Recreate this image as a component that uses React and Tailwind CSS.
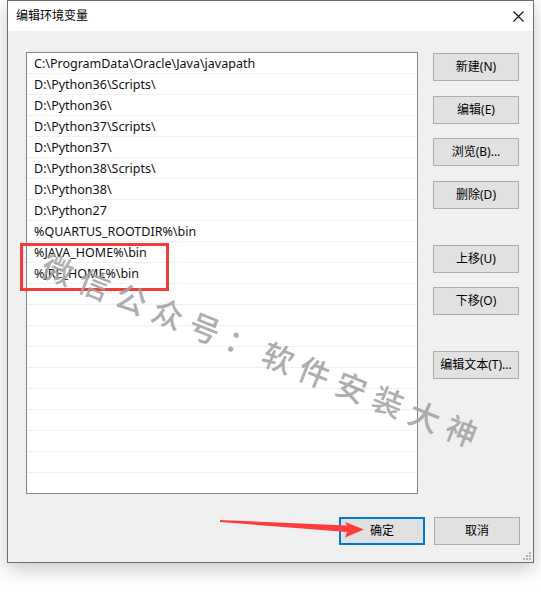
import React from "react";

const items = [
  "C:\\ProgramData\\Oracle\\Java\\javapath",
  "D:\\Python36\\Scripts\\",
  "D:\\Python36\\",
  "D:\\Python37\\Scripts\\",
  "D:\\Python37\\",
  "D:\\Python38\\Scripts\\",
  "D:\\Python38\\",
  "D:\\Python27",
  "%QUARTUS_ROOTDIR%\\bin",
  "%JAVA_HOME%\\bin",
  "%JRE_HOME%\\bin",
];

function Btn({ children, className = "", primary = false }) {
  return (
    <div
      className={
        "w-[86px] h-[28px] flex items-center justify-center bg-[#e1e1e1] text-[12px] text-black " +
        (primary ? "border-2 border-[#0078d7] " : "border border-[#adadad] ") +
        className
      }
    >
      {children}
    </div>
  );
}

export default function App() {
  const rows = Array.from({ length: 22 }, (_, i) => items[i] || "");
  return (
    <div
      className="relative w-[541px] h-[603px] bg-white overflow-hidden"
      style={{ fontFamily: '"Noto Sans", "Noto Sans CJK SC", sans-serif' }}
    >
      <div className="ml-[7px] w-[527px] h-[563px] border border-[#6e6e6e] bg-[#f0f0f0] flex flex-col shadow-[0_6px_18px_rgba(0,0,0,0.22)]">
        {/* title bar */}
        <div className="h-[30px] bg-white flex items-center justify-between pl-[8px] pr-[9px]">
          <span className="text-[12px] text-black leading-none">编辑环境变量</span>
          <svg width="11" height="11" viewBox="0 0 11 11">
            <path d="M0.5 0.5 L10.5 10.5 M10.5 0.5 L0.5 10.5" stroke="#111" strokeWidth="1.1" fill="none" />
          </svg>
        </div>
        {/* body */}
        <div className="flex flex-col flex-1">
          <div className="flex pl-[18px] pr-[14px] pt-[21px]">
            <div className="w-[392px] h-[442px] border border-[#82878f] bg-white overflow-hidden">
              {rows.map((t, i) => (
                <div
                  key={i}
                  className="h-[21px] border-b border-[#f0f0f0] flex items-center pl-[7px] pt-[2px] text-[12.5px] text-[#111] whitespace-nowrap"
                >
                  {t}
                </div>
              ))}
            </div>
            <div className="ml-[15px] flex flex-col pt-px">
              <Btn>新建(N)</Btn>
              <Btn className="mt-[15px]">编辑(E)</Btn>
              <Btn className="mt-[14px]">浏览(B)...</Btn>
              <Btn className="mt-[15px]">删除(D)</Btn>
              <Btn className="mt-[36px]">上移(U)</Btn>
              <Btn className="mt-[14px]">下移(O)</Btn>
              <Btn className="mt-[36px]">编辑文本(T)...</Btn>
            </div>
          </div>
          <div className="flex justify-end gap-[9px] pr-[13px] mt-[23px]">
            <Btn primary>确定</Btn>
            <Btn>取消</Btn>
          </div>
          <div className="flex-1 flex justify-end items-end pr-[2px] pb-[2px]">
            <svg width="9" height="9" viewBox="0 0 9 9">
              <rect x="7" y="1" width="2" height="2" fill="#b4b4b4" />
              <rect x="4" y="4" width="2" height="2" fill="#b4b4b4" />
              <rect x="7" y="4" width="2" height="2" fill="#b4b4b4" />
              <rect x="1" y="7" width="2" height="2" fill="#b4b4b4" />
              <rect x="4" y="7" width="2" height="2" fill="#b4b4b4" />
              <rect x="7" y="7" width="2" height="2" fill="#b4b4b4" />
            </svg>
          </div>
        </div>
      </div>

      {/* red highlight box */}
      <div className="absolute left-[20px] top-[243px] w-[149px] h-[48px] border-[3px] border-[#f23b3b]" />

      {/* watermark */}
      <div
        className="absolute left-[26px] top-[331px] w-[476px] h-[40px] flex items-center justify-center whitespace-nowrap text-[31px] font-medium leading-[40px] tracking-[8.5px] text-[#a3a3a3]/90 rotate-[21.8deg] pointer-events-none"
        style={{ fontFamily: '"Noto Sans CJK SC", sans-serif' }}
      >
        微信公众号：软件安装大神
      </div>

      {/* red arrow */}
      <svg className="absolute left-0 top-0 pointer-events-none" width="541" height="603">
        <polygon
          points="220,520 347,525.5 345,522 364,529.5 345,537.5 347,532 220,522"
          fill="#ff3c3c"
        />
      </svg>
    </div>
  );
}
